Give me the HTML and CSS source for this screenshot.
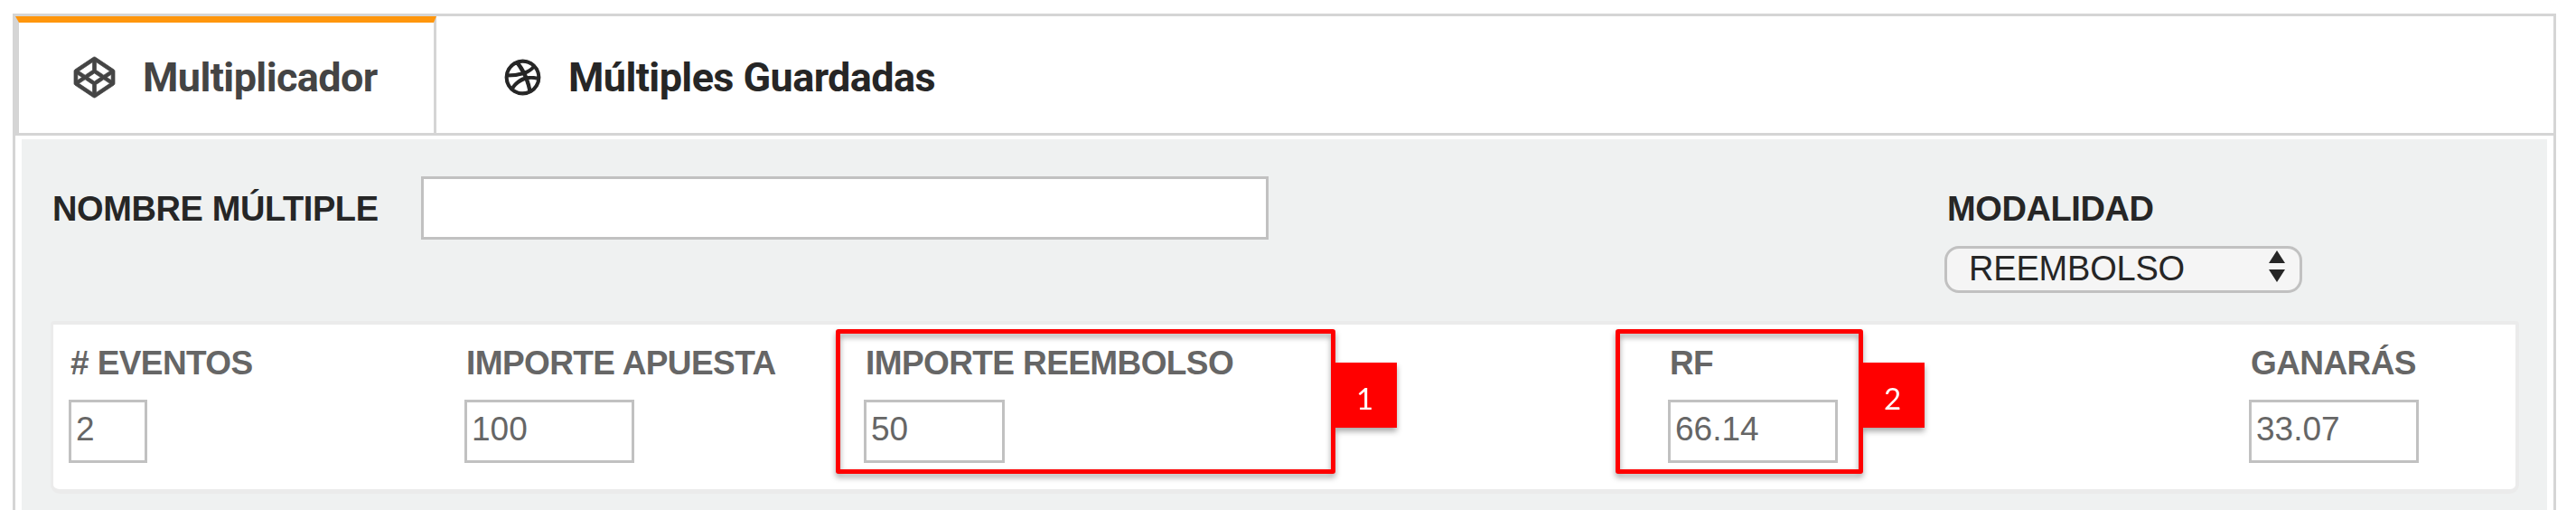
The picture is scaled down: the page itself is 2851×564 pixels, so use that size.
FILE: index.html
```html
<!DOCTYPE html>
<html lang="es">
<head>
    <meta charset="UTF-8">
    <title>Multiplicador</title>
    <link rel="stylesheet" href="styles.css">
</head>
<body>

    <div class="panel">
        <!-- Pestañas -->
        <nav class="tabs">
            <a class="tab active">
                <svg class="icon icon-codepen" viewBox="0 0 1792 1792"><path fill-rule="evenodd" d="M216 1169l603 402v-359l-334-223zM154 1025l193-129-193-129zM973 1571l603-402-269-180-334 223zM896 1078l272-182-272-182-272 182zM485 803l334-223v-359l-603 402zM1445 896l193 129v-258zM1307 803l269-180-603-402v359zM1792 623v546q0 41-34 64l-819 546q-21 13-43 13t-43-13l-819-546q-34-23-34-64v-546q0-41 34-64l819-546q21-13 43-13t43 13l819 546q34 23 34 64z"/></svg>
                <span>Multiplicador</span>
            </a>
            <a class="tab">
                <svg class="icon icon-dribbble" viewBox="128 0 1536 1792"><path d="M1152 1500q-42-241-140-498h-2l-2 1q-16 6-43 16.5t-101 49-137 82-131 114.5-103 148l-15-11q184 150 418 150 132 0 256-52zm-185-607q-21-49-53-111-311 93-673 93-1 7-1 21 0 124 44 236.500t124 201.500q50-89 123.500-166.500t142.500-124.500 130.500-81 99.500-48l37-13q4-1 13-3.500t13-4.500zm-107-212q-120-213-244-378-138 65-234 186t-128 272q302 0 606-80zm684 319q-210-60-409-29 87 239 128 469 111-75 185-189.500t96-250.500zm-215-596q-185-164-433-164-76 0-155 19 131 170 246 382 69-26 130-60.500t96.500-61.500 65.500-57 37.500-40.500zm223 485q-3-232-149-410l-1 1q-9 12-19 24.500t-43.500 44.500-71 60.500-100 65-131.500 64.500q25 53 44 95 2 5 6.500 17t7.500 17q36-5 74.500-7t73.500-2 69 1.500 64 4 56.500 5.500 48 6.500 36.500 6 25 4.500zm112 7q0 209-103 385.500t-279.500 279.500-385.500 103-385.500-103-279.500-279.500-103-385.500 103-385.500 279.500-279.500 385.500-103 385.500 103 279.500 279.500 103 385.500z"/></svg>
                <span>Múltiples Guardadas</span>
            </a>
        </nav>

        <div class="content">
            <!-- Nombre y modalidad -->
            <div class="top-row">
                <label class="name-label" for="nombre">NOMBRE MÚLTIPLE</label>
                <input class="name-input" type="text" id="nombre">
                <div class="mode">
                    <label for="modalidad">MODALIDAD</label>
                    <div class="select-wrapper">
                        <select id="modalidad">
                            <option>REEMBOLSO</option>
                        </select>
                        <svg class="arrows" viewBox="0 0 18 35"><path d="M9 0l9 14H0zM9 35l9-14H0z"/></svg>
                    </div>
                </div>
            </div>

            <!-- Datos de la apuesta -->
            <div class="card">
                <div class="field">
                    <label for="eventos"># EVENTOS</label>
                    <input class="w-small" type="text" id="eventos" value="2">
                </div>
                <div class="field">
                    <label for="apuesta">IMPORTE APUESTA</label>
                    <input type="text" id="apuesta" value="100">
                </div>
                <div class="field">
                    <label for="reembolso">IMPORTE REEMBOLSO</label>
                    <input class="w-medium" type="text" id="reembolso" value="50">
                    <div class="mark mark-refund"><span class="badge">1</span></div>
                </div>
                <div class="field">
                    <label for="rf">RF</label>
                    <input type="text" id="rf" value="66.14">
                    <div class="mark mark-rf"><span class="badge">2</span></div>
                </div>
                <div class="field">
                    <label for="ganaras">GANARÁS</label>
                    <input type="text" id="ganaras" value="33.07">
                </div>
            </div>
        </div>
    </div>

</body>
</html>
```
FILE: styles.css
```css
/* Estilos generales */
* {
    box-sizing: border-box;
}

body {
    margin: 0;
    height: 564px;
    padding: 15px 22px 0 14px;
    overflow: hidden;
    background-color: #ffffff;
    font-family: "Liberation Sans", Arial, sans-serif;
    font-size: 38px;
    color: #262626;
}

.panel {
    height: 549px;
    border: 3px solid #d5d5d5;
    border-bottom: 0;
}

/* Pestañas */
.tabs {
    display: flex;
    height: 132px;
    border-bottom: 3px solid #d5d5d5;
}

.tab {
    display: flex;
    align-items: center;
    padding: 6px 0 0 76px;
    font-family: Roboto, Arial, sans-serif;
    font-size: 45px;
    font-weight: bold;
    letter-spacing: -0.6px;
    white-space: nowrap;
}

.tab.active {
    width: 466px;
    padding: 0 0 1px 61px;
    border-top: 7px solid #ff960c;
    border-left: 4px solid #d5d5d5;
    border-right: 3px solid #d5d5d5;
    color: #444444;
}

.icon {
    height: 45px;
    overflow: visible;
    fill: currentColor;
    stroke: currentColor;
    stroke-width: 30;
}

.icon-codepen {
    width: 45px;
    margin-right: 31px;
}

.icon-dribbble {
    width: 39px;
    margin-right: 31px;
    stroke-width: 50;
}

/* Contenido */
.content {
    height: 410px;
    margin: 4px 7px 0;
    padding: 41px 31px 0 32px;
    background-color: #eff1f1;
}

label {
    display: block;
    font-weight: bold;
    line-height: 44px;
    white-space: nowrap;
}

.top-row {
    display: flex;
    align-items: flex-start;
    height: 160px;
}

.name-label {
    width: 410px;
    padding: 14px 0 0 2px;
    letter-spacing: -0.4px;
}

input {
    height: 70px;
    border: 3px solid #c1c1c1;
    border-radius: 0;
    background-color: #ffffff;
    font: inherit;
    outline: none;
}

.name-input {
    width: 938px;
}

.mode {
    margin-left: 748px;
    padding-top: 14px;
}

.mode label {
    padding-left: 3px;
    letter-spacing: -0.4px;
}

.select-wrapper {
    position: relative;
    width: 396px;
    margin-top: 19px;
}

select {
    appearance: none;
    display: block;
    width: 100%;
    height: 52px;
    padding: 0 0 3px 24px;
    border: 3px solid #c1c1c1;
    border-radius: 16px;
    background-color: #f5f5f5;
    font: inherit;
    letter-spacing: -0.2px;
    color: inherit;
}

.arrows {
    position: absolute;
    top: 5px;
    right: 19px;
    width: 18px;
    height: 35px;
    fill: #262626;
}

/* Tarjeta con los importes */
.card {
    display: grid;
    grid-template-columns: 438px 442px 890px 643px auto;
    height: 191px;
    padding: 26px 0 0 17px;
    border: 3px solid #ebebeb;
    border-width: 4px 4px 5px 3px;
    border-radius: 4px 4px 10px 10px;
    background-color: #ffffff;
    font-size: 37px;
    color: #666666;
}

.field {
    position: relative;
}

.field label {
    height: 57px;
    line-height: 34px;
    padding-left: 2px;
    letter-spacing: -0.6px;
}

.field input {
    display: block;
    width: 188px;
    padding: 0 0 5px 5px;
    color: #666666;
}

.field .w-small {
    width: 87px;
}

.field .w-medium {
    width: 156px;
}

/* Recuadros numerados */
.mark {
    position: absolute;
    top: -21px;
    height: 160px;
    border: 5px solid #ff0000;
    border-radius: 3px;
    filter: drop-shadow(0 4px 3px rgba(0, 0, 0, 0.35));
}

.mark-refund {
    left: -31px;
    width: 553px;
}

.mark-rf {
    left: -58px;
    width: 274px;
}

.badge {
    position: absolute;
    top: 32px;
    right: -73px;
    width: 71px;
    height: 72px;
    background-color: #ff0000;
    color: #ffffff;
    font-family: Lato, sans-serif;
    font-size: 33px;
    line-height: 78px;
    text-align: center;
}
```
